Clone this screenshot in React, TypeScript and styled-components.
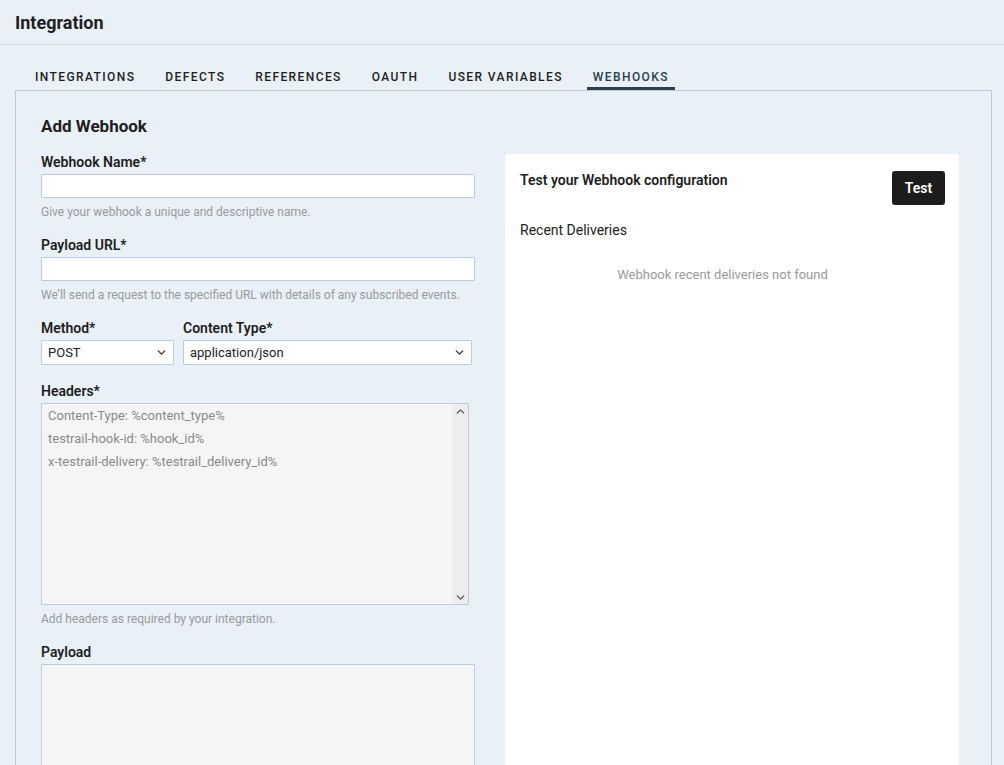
import styled, { createGlobalStyle } from 'styled-components';
import { ChevronDown, ChevronUp } from 'lucide-react';

const GlobalStyle = createGlobalStyle`
  html, body {
    margin: 0;
    padding: 0;
    height: 100%;
    overflow: hidden;
    background: #e9f0f7;
  }
  body {
    font-family: Roboto, 'Liberation Sans', sans-serif;
    color: #1e1e1e;
  }
  * { box-sizing: border-box; }
`;

const Page = styled.div`
  min-height: 765px;
  background: #e9f0f7;
`;

const Header = styled.header`
  height: 45px;
  display: flex;
  align-items: center;
  padding: 0 15px;
  border-bottom: 1px solid #d3dce5;
`;

const Title = styled.h1`
  margin: 0;
  font-size: 18px;
  font-weight: 700;
  color: #1f1f1f;
`;

const Body = styled.div`
  padding: 18px 12px 0 15px;
`;

const Tabs = styled.nav`
  display: flex;
  gap: 18px;
  padding-left: 14px;
  height: 27px;
`;

const Tab = styled.div<{ active?: boolean }>`
  padding: 4px 6px 0;
  display: flex;
  align-items: center;
  font-size: 12px;
  font-weight: 500;
  letter-spacing: 1.4px;
  color: ${(p) => (p.active ? '#2c3e50' : '#1e1e1e')};
  border-bottom: 3px solid ${(p) => (p.active ? '#2c3e50' : 'transparent')};
`;

const Panel = styled.section`
  border: 1px solid #b9cbd8;
  border-bottom: none;
  padding: 25px 32px 0 25px;
  min-height: 700px;
`;

const PanelTitle = styled.h2`
  margin: 0 0 18px;
  font-size: 17px;
  font-weight: 700;
  line-height: 20px;
`;

const Columns = styled.div`
  display: grid;
  grid-template-columns: 434px 1fr;
  gap: 30px;
  align-items: start;
`;

const Form = styled.div`
  display: flex;
  flex-direction: column;
`;

const Field = styled.div`
  display: flex;
  flex-direction: column;
  margin-bottom: 18px;
`;

const Row = styled.div`
  display: flex;
  gap: 9px;
  margin-bottom: 18px;
`;

const Label = styled.label`
  font-size: 14px;
  font-weight: 600;
  line-height: 16px;
  margin-bottom: 4px;
  color: #1e1e1e;
`;

const Input = styled.input`
  height: 24px;
  width: 100%;
  border: 1px solid #b8cddd;
  background: #fff;
  border-radius: 1px;
  outline: none;
  padding: 0 6px;
`;

const Hint = styled.div`
  margin-top: 7px;
  font-size: 12px;
  line-height: 14px;
  color: #9a9a9a;
`;

const SelectWrap = styled.div<{ w: number }>`
  position: relative;
  width: ${(p) => p.w}px;
  svg {
    position: absolute;
    right: 6px;
    top: 6px;
    pointer-events: none;
    color: #333;
  }
`;

const Select = styled.select`
  appearance: none;
  width: 100%;
  height: 25px;
  border: 1px solid #b8cddd;
  background: #fff;
  border-radius: 1px;
  padding: 0 6px;
  font-family: Roboto, 'Liberation Sans', sans-serif;
  font-size: 13px;
  color: #222;
  outline: none;
`;

const AreaWrap = styled.div<{ w: number; h: number }>`
  position: relative;
  width: ${(p) => p.w}px;
  height: ${(p) => p.h}px;
`;

const TextArea = styled.textarea`
  width: 100%;
  height: 100%;
  resize: none;
  overflow: hidden;
  border: 1px solid #b8cddd;
  background: #f5f5f5;
  border-radius: 1px;
  padding: 0 22px 0 6px;
  font-family: Roboto, 'Liberation Sans', sans-serif;
  font-size: 13px;
  line-height: 23px;
  color: #8a8a8a;
  outline: none;
`;

const ScrollTrack = styled.div`
  position: absolute;
  right: 1px;
  top: 1px;
  bottom: 1px;
  width: 16px;
  background: #ededed;
  display: flex;
  flex-direction: column;
  justify-content: space-between;
  align-items: center;
  padding: 1px 0 0;
  color: #555;
`;

const Card = styled.div`
  background: #fff;
  border-radius: 3px;
  padding: 17px 14px 0 15px;
  min-height: 620px;
`;

const CardHead = styled.div`
  display: flex;
  justify-content: space-between;
  align-items: flex-start;
`;

const CardTitle = styled.div`
  font-size: 14px;
  font-weight: 600;
  line-height: 18px;
`;

const Button = styled.button`
  width: 53px;
  height: 34px;
  border: none;
  border-radius: 3px;
  background: #1c1c1c;
  color: #fff;
  font-family: Roboto, 'Liberation Sans', sans-serif;
  font-size: 14px;
  font-weight: 600;
`;

const SubTitle = styled.div`
  margin-top: 17px;
  font-size: 14px;
  line-height: 16px;
  color: #222;
`;

const Empty = styled.div`
  margin-top: 29px;
  padding-right: 20px;
  text-align: center;
  font-size: 13px;
  line-height: 16px;
  color: #9a9a9a;
`;

const tabs = ['INTEGRATIONS', 'DEFECTS', 'REFERENCES', 'OAUTH', 'USER VARIABLES', 'WEBHOOKS'];

const headers = `Content-Type: %content_type%
testrail-hook-id: %hook_id%
x-testrail-delivery: %testrail_delivery_id%`;

export default function App() {
  return (
    <Page>
      <GlobalStyle />
      <Header>
        <Title>Integration</Title>
      </Header>
      <Body>
        <Tabs>
          {tabs.map((t) => (
            <Tab key={t} active={t === 'WEBHOOKS'}>
              {t}
            </Tab>
          ))}
        </Tabs>
        <Panel>
          <PanelTitle>Add Webhook</PanelTitle>
          <Columns>
            <Form>
              <Field>
                <Label>Webhook Name*</Label>
                <Input />
                <Hint>Give your webhook a unique and descriptive name.</Hint>
              </Field>
              <Field>
                <Label>Payload URL*</Label>
                <Input />
                <Hint>We’ll send a request to the specified URL with details of any subscribed events.</Hint>
              </Field>
              <Row>
                <Field style={{ marginBottom: 0 }}>
                  <Label>Method*</Label>
                  <SelectWrap w={133}>
                    <Select defaultValue="POST">
                      <option>POST</option>
                      <option>GET</option>
                      <option>PUT</option>
                    </Select>
                    <ChevronDown size={13} strokeWidth={2.5} />
                  </SelectWrap>
                </Field>
                <Field style={{ marginBottom: 0 }}>
                  <Label>Content Type*</Label>
                  <SelectWrap w={289}>
                    <Select defaultValue="application/json">
                      <option>application/json</option>
                      <option>application/x-www-form-urlencoded</option>
                    </Select>
                    <ChevronDown size={13} strokeWidth={2.5} />
                  </SelectWrap>
                </Field>
              </Row>
              <Field>
                <Label>Headers*</Label>
                <AreaWrap w={428} h={202}>
                  <TextArea defaultValue={headers} />
                  <ScrollTrack>
                    <ChevronUp size={13} strokeWidth={2.5} />
                    <ChevronDown size={13} strokeWidth={2.5} />
                  </ScrollTrack>
                </AreaWrap>
                <Hint>Add headers as required by your integration.</Hint>
              </Field>
              <Field>
                <Label>Payload</Label>
                <AreaWrap w={434} h={160}>
                  <TextArea />
                </AreaWrap>
              </Field>
            </Form>
            <Card>
              <CardHead>
                <CardTitle>Test your Webhook configuration</CardTitle>
                <Button>Test</Button>
              </CardHead>
              <SubTitle>Recent Deliveries</SubTitle>
              <Empty>Webhook recent deliveries not found</Empty>
            </Card>
          </Columns>
        </Panel>
      </Body>
    </Page>
  );
}
